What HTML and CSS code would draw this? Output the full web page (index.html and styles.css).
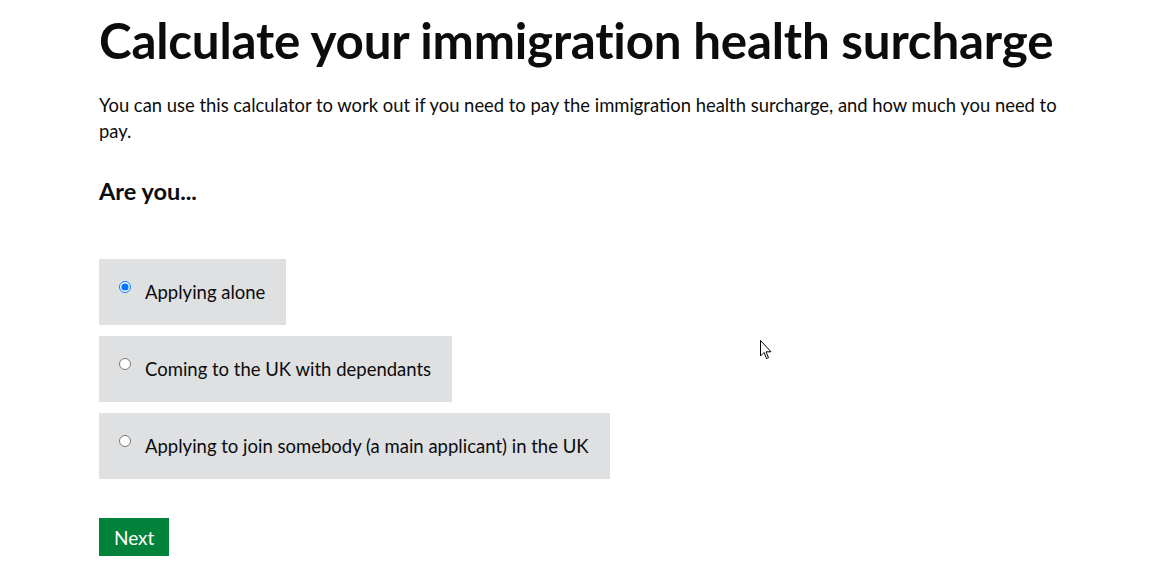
FILE: index.html
```html
<!DOCTYPE html>
<html lang="en">
<head>
<meta charset="utf-8">
<title>Calculate your immigration health surcharge</title>
<link rel="stylesheet" href="styles.css">
</head>
<body>
<main class="page">
  <h1 class="title">Calculate your immigration health surcharge</h1>
  <p class="lead">You can use this calculator to work out if you need to pay the immigration health surcharge, and how much you need to pay.</p>
  <form class="form">
    <fieldset class="fieldset">
      <legend class="legend">Are you...</legend>
      <div class="options">
        <label class="option"><input class="radio" type="radio" name="type" checked><span>Applying alone</span></label>
        <label class="option"><input class="radio" type="radio" name="type"><span>Coming to the UK with dependants</span></label>
        <label class="option"><input class="radio" type="radio" name="type"><span>Applying to join somebody (a main applicant) in the UK</span></label>
      </div>
    </fieldset>
    <button class="button" type="button">Next</button>
  </form>
  <svg class="cursor" width="13" height="20" viewBox="0 0 13 20"><path d="M0.5 0.5 L0.5 16 L4 12.5 L6.5 18.5 L8.5 17.7 L6 11.8 L11 11.8 Z" fill="#fff" stroke="#000" stroke-width="1" stroke-linejoin="miter"/></svg>
</main>
</body>
</html>
```
FILE: styles.css
```css
html, body { margin: 0; padding: 0; background: #fff; }
body { font-family: Lato, "Noto Sans", sans-serif; color: #0b0c0c; }
.page { position: relative; padding: 16px 0 0 99px; width: 980px; }
.title { font-size: 49.3px; font-weight: 700; line-height: 1; margin: 0; letter-spacing: -0.2px; }
.lead { font-size: 18.4px; line-height: 26px; margin: 27px 0 0; }
.form { margin: 0; }
.fieldset { border: 0; padding: 0; margin: 34px 0 0; }
.legend { font-size: 23.5px; font-weight: 700; padding: 0; line-height: 26px; }
.options { display: flex; flex-direction: column; align-items: flex-start; gap: 11px; margin-top: 55px; }
.option { display: flex; align-items: center; gap: 14px; background: #dee0e2; padding: 0 21px 0 20px; height: 66px; font-size: 18.5px; }
.radio { margin: 0; width: 12px; height: 12px; position: relative; top: -5px; accent-color: #0075ff; }
.button { display: block; margin-top: 39px; background: #00823b; color: #fff; border: 0; box-shadow: 0 2px 0 #003618; font-family: inherit; font-size: 19px; padding: 0 15px; height: 38px; border-radius: 0; }
.cursor { position: absolute; left: 760px; top: 340px; }
```
